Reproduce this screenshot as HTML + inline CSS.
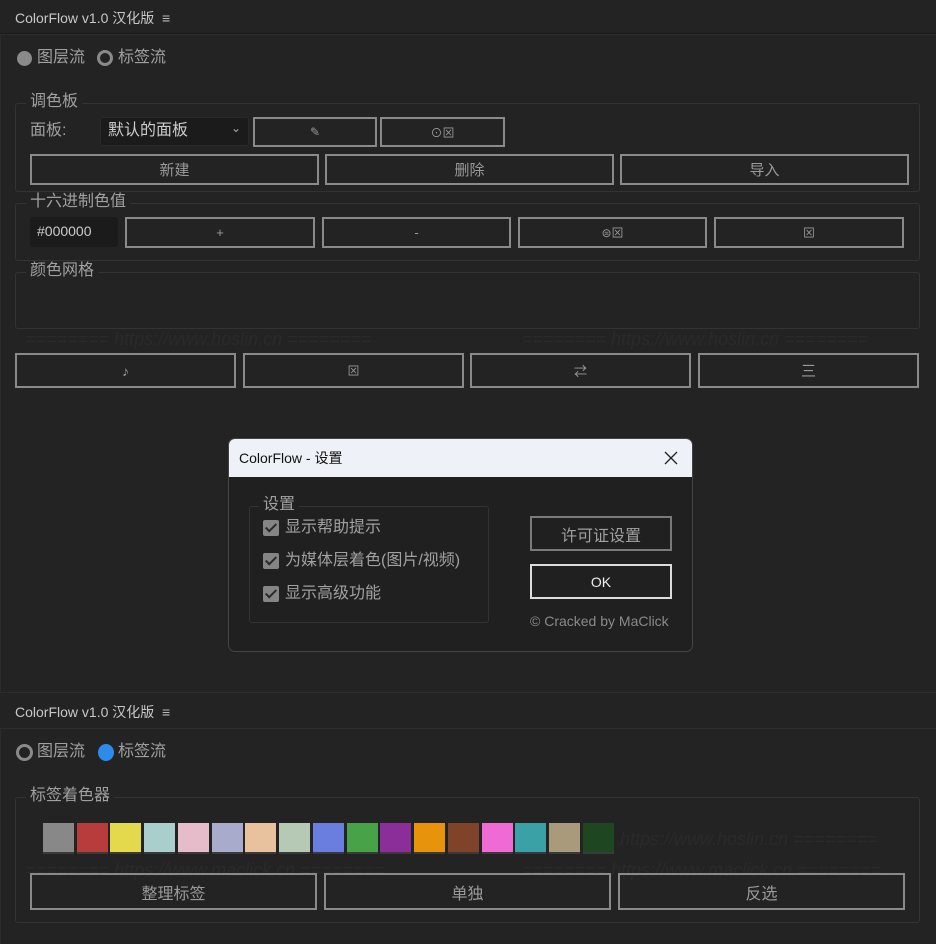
<!DOCTYPE html>
<html><head><meta charset="utf-8"><style>
*{box-sizing:border-box;margin:0;padding:0}
body{width:936px;height:944px;background:#232323;position:relative;overflow:hidden;font-family:"Liberation Sans","Noto Sans CJK SC",sans-serif;color:#9a9a9a}
.a{position:absolute}
.t{font-size:14px;color:#c8c8c8;white-space:nowrap}
.cn{font-size:16px;color:#a0a0a0;white-space:nowrap;line-height:20px}
.box{position:absolute;border:1px solid #333;border-radius:3px}
.lg{position:absolute;background:#232323;padding:0 4px;font-size:16px;color:#a0a0a0;line-height:18px}
.btn{position:absolute;border:2px solid #8a8a8a;color:#9a9a9a;font-size:15px;display:flex;align-items:center;justify-content:center}
.sw{position:absolute;top:823px;width:31px;height:31px;border-bottom:2px solid #3a3a3a}
.cb{position:absolute;width:16px;height:16px;background:#858585;border-radius:2px}
.cb:after{content:"";position:absolute;left:5px;top:1px;width:4px;height:9px;border:solid #2a2a2a;border-width:0 2px 2px 0;transform:rotate(45deg)}
.wm{position:absolute;font-size:18px;font-style:italic;color:#2a2a2a;white-space:nowrap}
</style></head><body>
<div class="a" style="left:0;top:0;width:936px;height:34px;background:#232323;border-bottom:1px solid #1a1a1a"></div>
<div class="a t" style="left:15px;top:8px">ColorFlow v1.0 汉化版 &nbsp;<span style="color:#bbb">≡</span></div>
<div class="a" style="left:0;top:34px;width:936px;height:659px;border:1px solid #2c2c2c;border-right:none"></div>
<div class="a" style="left:17px;top:51px;width:15px;height:15px;border-radius:50%;background:#8a8a8a"></div>
<div class="a cn" style="left:37px;top:48px">图层流</div>
<div class="a" style="left:97px;top:50px;width:16px;height:16px;border-radius:50%;border:3px solid #8a8a8a"></div>
<div class="a cn" style="left:118px;top:48px">标签流</div>
<div class="box" style="left:15px;top:103px;width:905px;height:89px"></div>
<div class="lg" style="left:26px;top:93px">调色板</div>
<div class="a cn" style="left:30px;top:121px">面板:</div>
<div class="a" style="left:100px;top:117px;width:149px;height:29px;background:#1b1b1b;border-radius:3px;border:1px solid #2a2a2a"></div>
<div class="a cn" style="left:108px;top:121px;color:#ccc">默认的面板</div>
<div class="a" style="left:231px;top:121px;font-size:12px;color:#aaa">⌄</div>
<div class="btn" style="left:253px;top:117px;width:124px;height:30px;font-size:12px">✎</div>
<div class="btn" style="left:380px;top:117px;width:125px;height:30px;font-size:12px">⊙⊠</div>
<div class="btn" style="left:30px;top:154px;width:289px;height:31px">新建</div>
<div class="btn" style="left:325px;top:154px;width:289px;height:31px">删除</div>
<div class="btn" style="left:620px;top:154px;width:289px;height:31px">导入</div>
<div class="box" style="left:15px;top:203px;width:905px;height:58px"></div>
<div class="lg" style="left:26px;top:193px">十六进制色值</div>
<div class="a" style="left:30px;top:217px;width:88px;height:30px;background:#1b1b1b;border-radius:3px;color:#ccc;font-size:14px;padding:6px 0 0 7px">#000000</div>
<div class="btn" style="left:125px;top:217px;width:190px;height:31px;font-size:13px">+</div>
<div class="btn" style="left:322px;top:217px;width:189px;height:31px;font-size:13px">-</div>
<div class="btn" style="left:518px;top:217px;width:189px;height:31px;font-size:12px">⊜⊠</div>
<div class="btn" style="left:714px;top:217px;width:190px;height:31px;font-size:12px">⊠</div>
<div class="box" style="left:15px;top:272px;width:905px;height:57px"></div>
<div class="lg" style="left:26px;top:262px">颜色网格</div>
<div class="wm" style="left:25px;top:329px">======== https://www.hoslin.cn ========</div>
<div class="wm" style="left:522px;top:329px">======== https://www.hoslin.cn ========</div>
<div class="btn" style="left:15px;top:353px;width:221px;height:35px;font-size:14px">♪</div>
<div class="btn" style="left:243px;top:353px;width:221px;height:35px;font-size:12px">⊠</div>
<div class="btn" style="left:470px;top:353px;width:221px;height:35px;font-size:13px">⇄</div>
<div class="btn" style="left:698px;top:353px;width:221px;height:35px;font-size:15px">三</div>
<div class="a" style="left:228px;top:438px;width:465px;height:214px;background:#202020;border:1px solid #444;border-radius:7px;overflow:hidden">
 <div style="height:38px;background:#eef1f7;display:flex;align-items:center;padding-left:10px;font-size:14px;color:#111;position:relative">ColorFlow - 设置
 <svg style="position:absolute;right:14px;top:12px" width="14" height="14" viewBox="0 0 14 14"><path d="M1 1L13 13M13 1L1 13" stroke="#222" stroke-width="1.3"/></svg></div>
</div>
<div class="box" style="left:249px;top:506px;width:240px;height:117px;border-color:#333"></div>
<div class="lg" style="left:259px;top:496px;background:#202020">设置</div>
<div class="cb" style="left:263px;top:520px"></div><div class="a cn" style="left:285px;top:518px">显示帮助提示</div>
<div class="cb" style="left:263px;top:553px"></div><div class="a cn" style="left:285px;top:551px">为媒体层着色(图片/视频)</div>
<div class="cb" style="left:263px;top:586px"></div><div class="a cn" style="left:285px;top:584px">显示高级功能</div>
<div class="btn" style="left:530px;top:516px;width:142px;height:35px;border-color:#7a7a7a;font-size:16px;color:#a0a0a0">许可证设置</div>
<div class="btn" style="left:530px;top:564px;width:142px;height:35px;border-color:#dcdcdc;color:#eee;font-size:14px">OK</div>
<div class="a" style="left:530px;top:613px;font-size:14px;color:#8a8a8a">© Cracked by MaClick</div>
<div class="a" style="left:0;top:693px;width:936px;height:251px;background:#232323"></div>
<div class="a t" style="left:15px;top:702px">ColorFlow v1.0 汉化版 &nbsp;<span style="color:#bbb">≡</span></div>
<div class="a" style="left:0;top:728px;width:936px;height:216px;border-top:1px solid #2e2e2e;border-left:1px solid #2c2c2c"></div>
<div class="a" style="left:16px;top:744px;width:17px;height:17px;border-radius:50%;border:3px solid #8a8a8a"></div>
<div class="a cn" style="left:37px;top:742px">图层流</div>
<div class="a" style="left:98px;top:744px;width:16px;height:17px;border-radius:50%;background:#2d8ceb"></div>
<div class="a cn" style="left:118px;top:742px">标签流</div>
<div class="box" style="left:15px;top:797px;width:905px;height:126px"></div>
<div class="lg" style="left:26px;top:787px">标签着色器</div>
<div class="wm" style="left:620px;top:829px">https://www.hoslin.cn ========</div>
<div class="wm" style="left:25px;top:860px">======== https://www.maclick.cn ========</div>
<div class="wm" style="left:522px;top:860px">======== https://www.maclick.cn ========</div>
<div class="sw" style="left:43px;background:#888"></div>
<div class="sw" style="left:77px;background:#b83c3c"></div>
<div class="sw" style="left:110px;background:#e4d94c"></div>
<div class="sw" style="left:144px;background:#a8cfcb"></div>
<div class="sw" style="left:178px;background:#e6bccb"></div>
<div class="sw" style="left:212px;background:#a9abcc"></div>
<div class="sw" style="left:245px;background:#e8c29e"></div>
<div class="sw" style="left:279px;background:#b5c9b4"></div>
<div class="sw" style="left:313px;background:#6a7ee0"></div>
<div class="sw" style="left:347px;background:#48a348"></div>
<div class="sw" style="left:380px;background:#8c2e99"></div>
<div class="sw" style="left:414px;background:#e8930c"></div>
<div class="sw" style="left:448px;background:#7f4329"></div>
<div class="sw" style="left:482px;background:#f06ad6"></div>
<div class="sw" style="left:515px;background:#3aa2a6"></div>
<div class="sw" style="left:549px;background:#a99a7b"></div>
<div class="sw" style="left:583px;background:#1e4620"></div>
<div class="btn" style="left:30px;top:873px;width:287px;height:37px;font-size:16px">整理标签</div>
<div class="btn" style="left:324px;top:873px;width:287px;height:37px;font-size:16px">单独</div>
<div class="btn" style="left:618px;top:873px;width:287px;height:37px;font-size:16px">反选</div>
</body></html>
